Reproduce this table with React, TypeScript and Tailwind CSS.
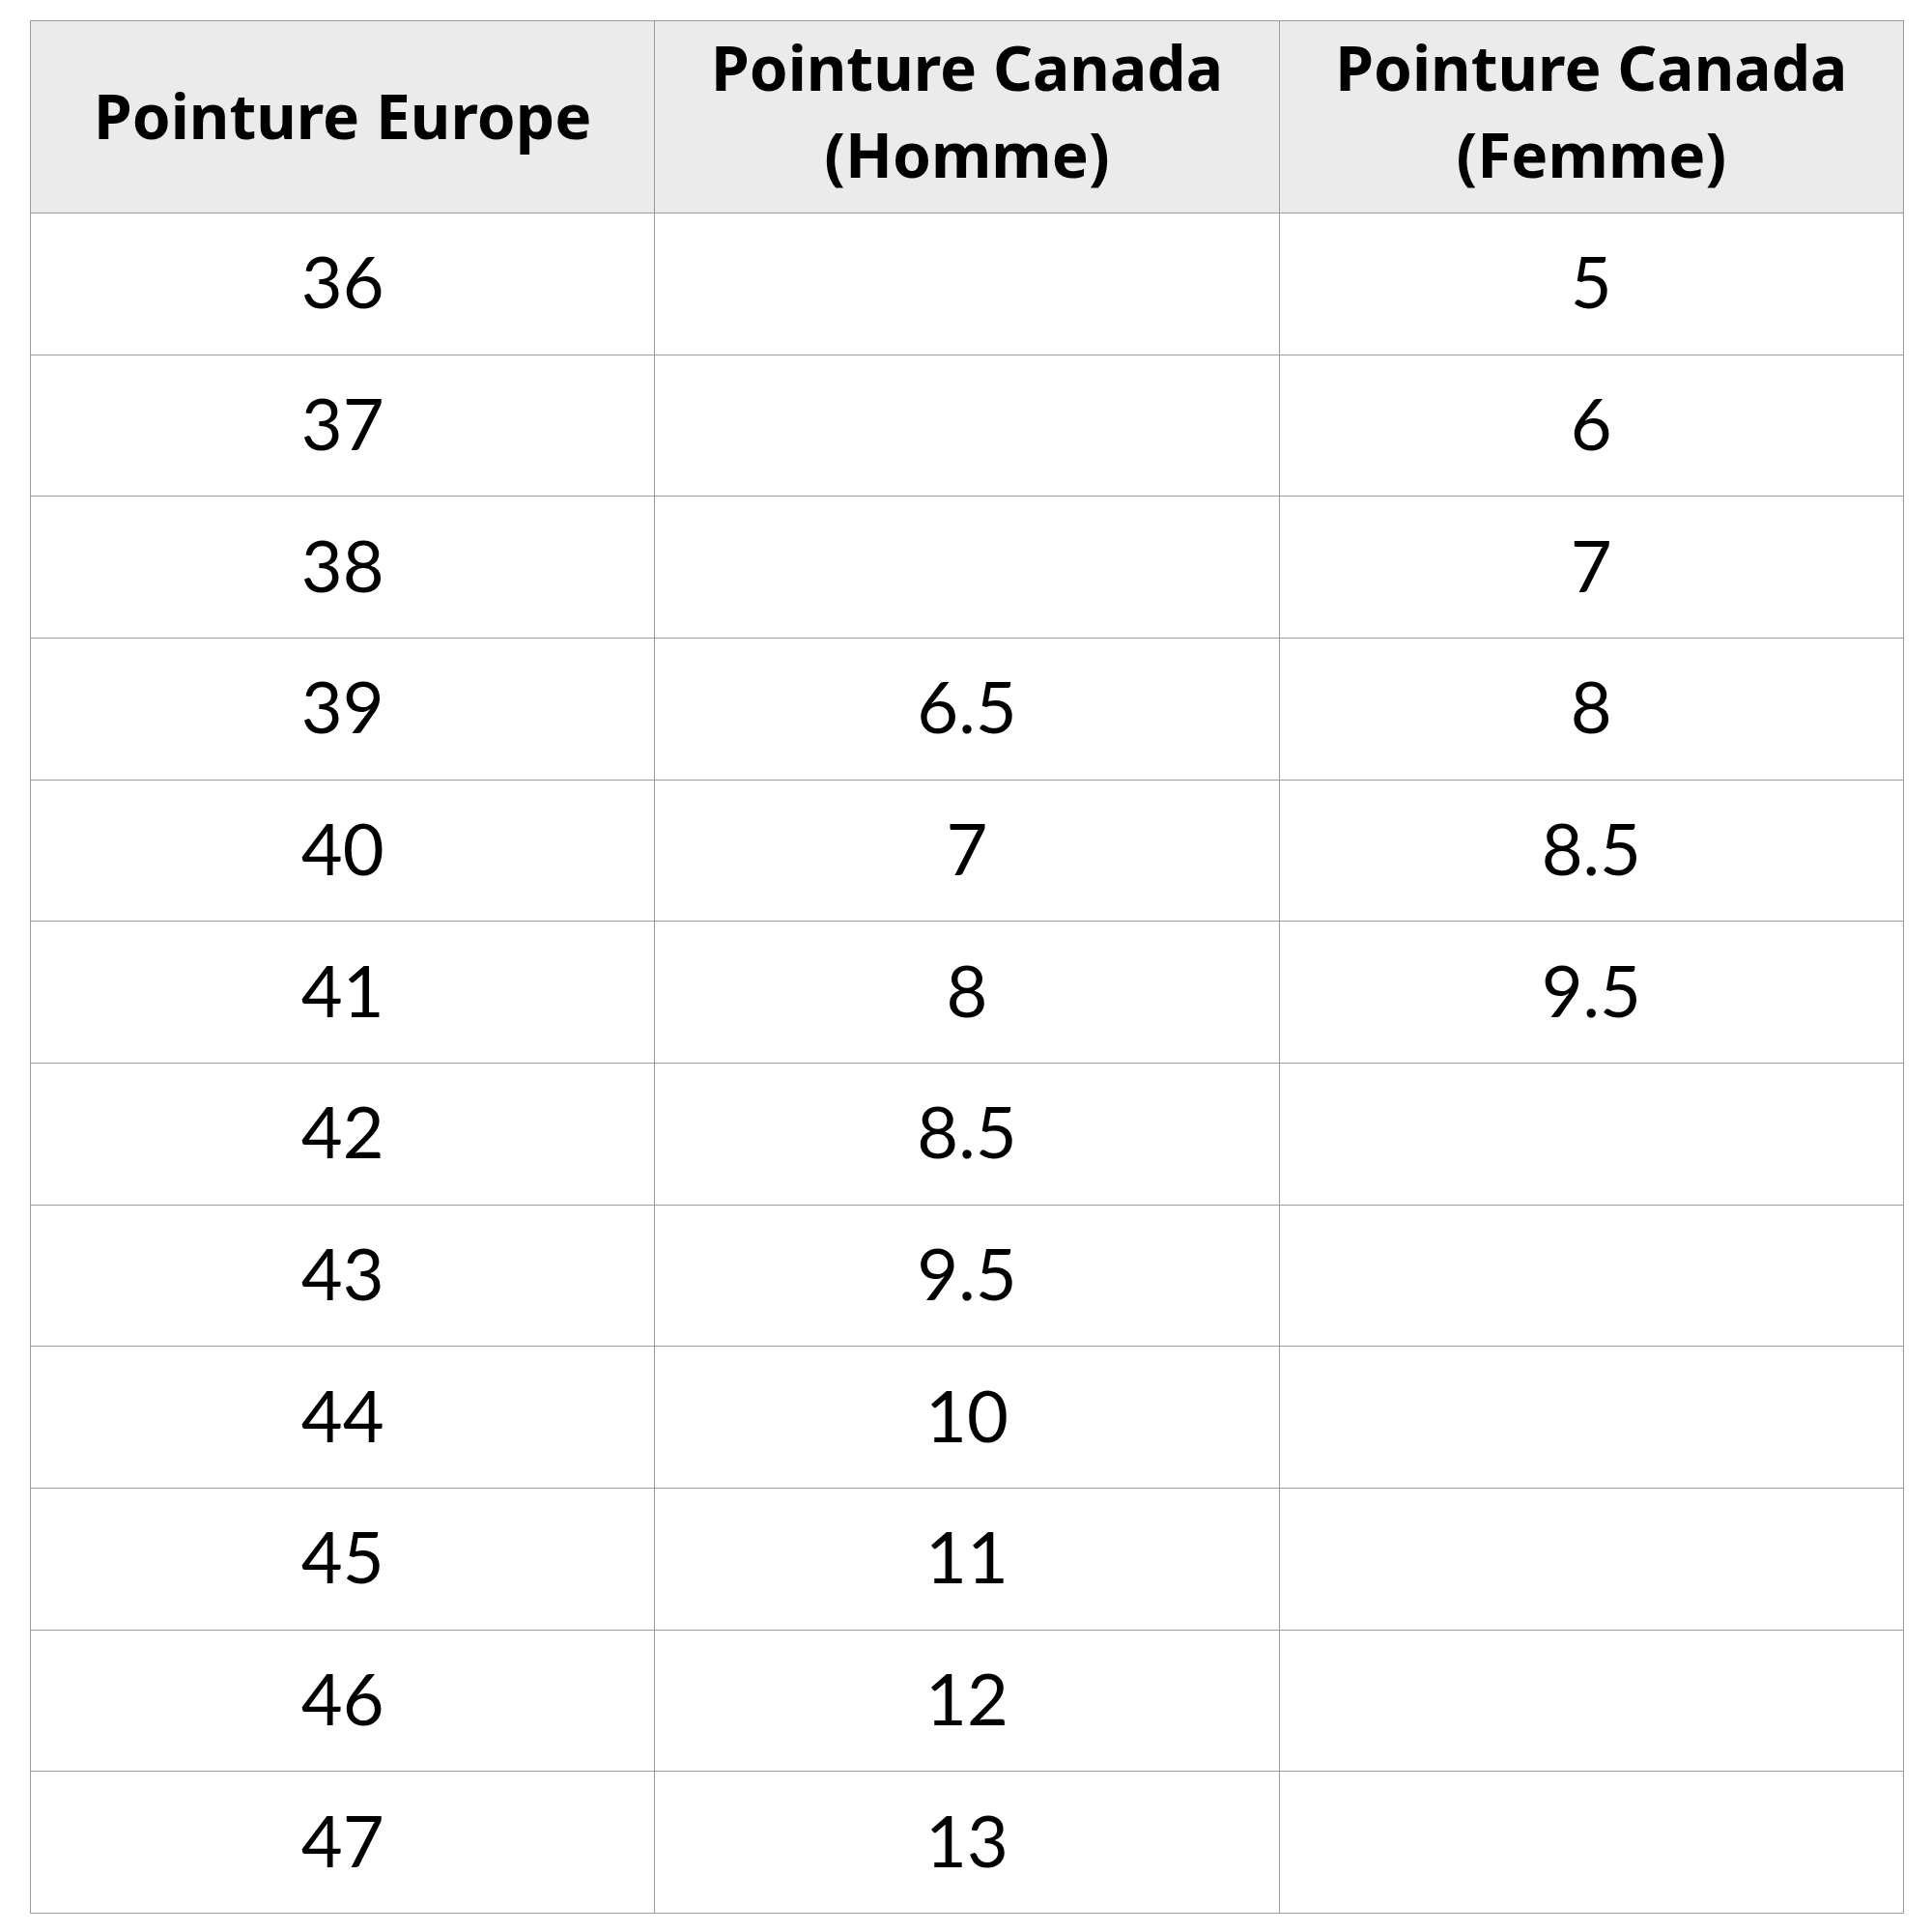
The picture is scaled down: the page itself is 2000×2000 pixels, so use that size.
import React from "react";

const rows: [string, string, string][] = [
  ["36", "", "5"],
  ["37", "", "6"],
  ["38", "", "7"],
  ["39", "6.5", "8"],
  ["40", "7", "8.5"],
  ["41", "8", "9.5"],
  ["42", "8.5", ""],
  ["43", "9.5", ""],
  ["44", "10", ""],
  ["45", "11", ""],
  ["46", "12", ""],
  ["47", "13", ""],
];

const headCls =
  "border-[1.5px] border-[#9c9c9c] text-[64px] font-bold leading-[90px] text-center align-middle px-2 font-['Noto_Sans',sans-serif]";

export default function App() {
  return (
    <div className="w-[2000px] h-[2000px] bg-white pt-[21px] pl-[31px] font-['Lato',sans-serif]">
      <table className="w-[1940px] table-fixed border-collapse text-black">
        <thead>
          <tr className="h-[199px] bg-[#ebebeb]">
            <th className={headCls}>
              <div className="-translate-y-[1px]">Pointure Europe</div>
            </th>
            <th className={headCls}>
              <div className="-translate-y-[6px]">
                Pointure Canada
                <br />
                (Homme)
              </div>
            </th>
            <th className={headCls}>
              <div className="-translate-y-[6px]">
                Pointure Canada
                <br />
                (Femme)
              </div>
            </th>
          </tr>
        </thead>
        <tbody>
          {rows.map((r, i) => (
            <tr key={i} className="h-[146.67px]">
              {r.map((c, j) => (
                <td
                  key={j}
                  className="border-[1.5px] border-[#9c9c9c] text-[74px] font-normal text-center align-middle leading-none pb-[5px]"
                >
                  {c}
                </td>
              ))}
            </tr>
          ))}
        </tbody>
      </table>
    </div>
  );
}
